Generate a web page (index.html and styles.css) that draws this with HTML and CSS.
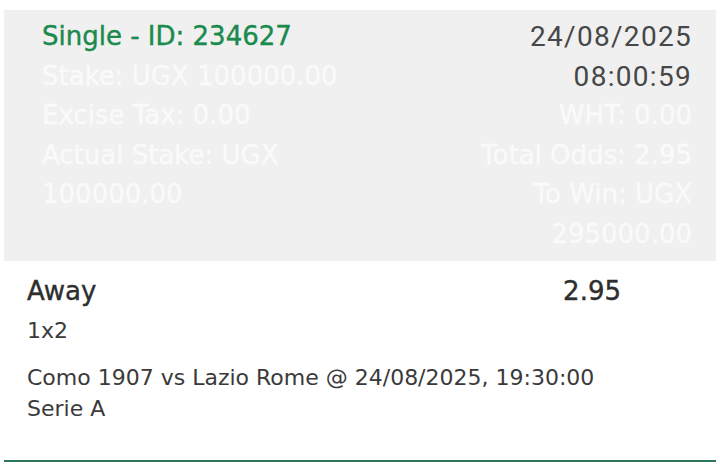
FILE: index.html
```html
<!DOCTYPE html>
<html>
<head>
<meta charset="utf-8">
<link rel="stylesheet" href="styles.css">
</head>
<body>
<div class="ticket">
  <div class="summary">
    <div class="col col-left">
      <div class="line title">Single - ID: 234627</div>
      <div class="line faint">Stake: UGX 100000.00</div>
      <div class="line faint">Excise Tax: 0.00</div>
      <div class="line faint">Actual Stake: UGX 100000.00</div>
    </div>
    <div class="col col-right">
      <div class="line stamp">24/08/2025</div>
      <div class="line stamp">08:00:59</div>
      <div class="line faint">WHT: 0.00</div>
      <div class="line faint">Total Odds: 2.95</div>
      <div class="line faint">To Win: UGX 295000.00</div>
    </div>
  </div>
  <div class="selection">
    <div class="sel-head">
      <span class="pick">Away</span>
      <span class="odds">2.95</span>
    </div>
    <div class="market">1x2</div>
    <div class="event">Como 1907 vs Lazio Rome @ 24/08/2025, 19:30:00</div>
    <div class="league">Serie A</div>
  </div>
</div>
</body>
</html>
```

FILE: styles.css
```css
html, body {
  margin: 0;
  padding: 0;
  background: #ffffff;
}

body {
  font-family: "DejaVu Sans", "Noto Sans", sans-serif;
}

.ticket {
  margin: 10px 4px 0;
  border-bottom: 2px solid #2f7558;
  padding-bottom: 36px;
}

.summary {
  background: #f0f0f0;
  display: grid;
  grid-template-columns: 305px 1fr;
  column-gap: 40px;
  padding: 7px 24px 7px 38px;
}

.col-right {
  text-align: right;
}

.line {
  font-size: 26px;
  line-height: 39.5px;
}

.title {
  color: #1a8a4d;
  -webkit-text-stroke: 0.4px currentColor;
}

.faint {
  color: #fafafa;
  -webkit-text-stroke: 0.4px currentColor;
}

.stamp {
  font-family: Roboto, sans-serif;
  color: #474747;
  font-size: 28px;
  letter-spacing: 1.3px;
}

.selection {
  padding: 13px 0 0 23px;
  color: #3a3a3a;
}

.sel-head {
  display: flex;
  justify-content: space-between;
  padding-right: 95px;
  font-size: 26px;
  line-height: 34px;
  color: #2e2e2e;
  -webkit-text-stroke: 0.4px currentColor;
}

.market {
  font-size: 22px;
  line-height: 46px;
  margin-bottom: 8px;
}

.event, .league {
  font-size: 22px;
  line-height: 31px;
}
```
